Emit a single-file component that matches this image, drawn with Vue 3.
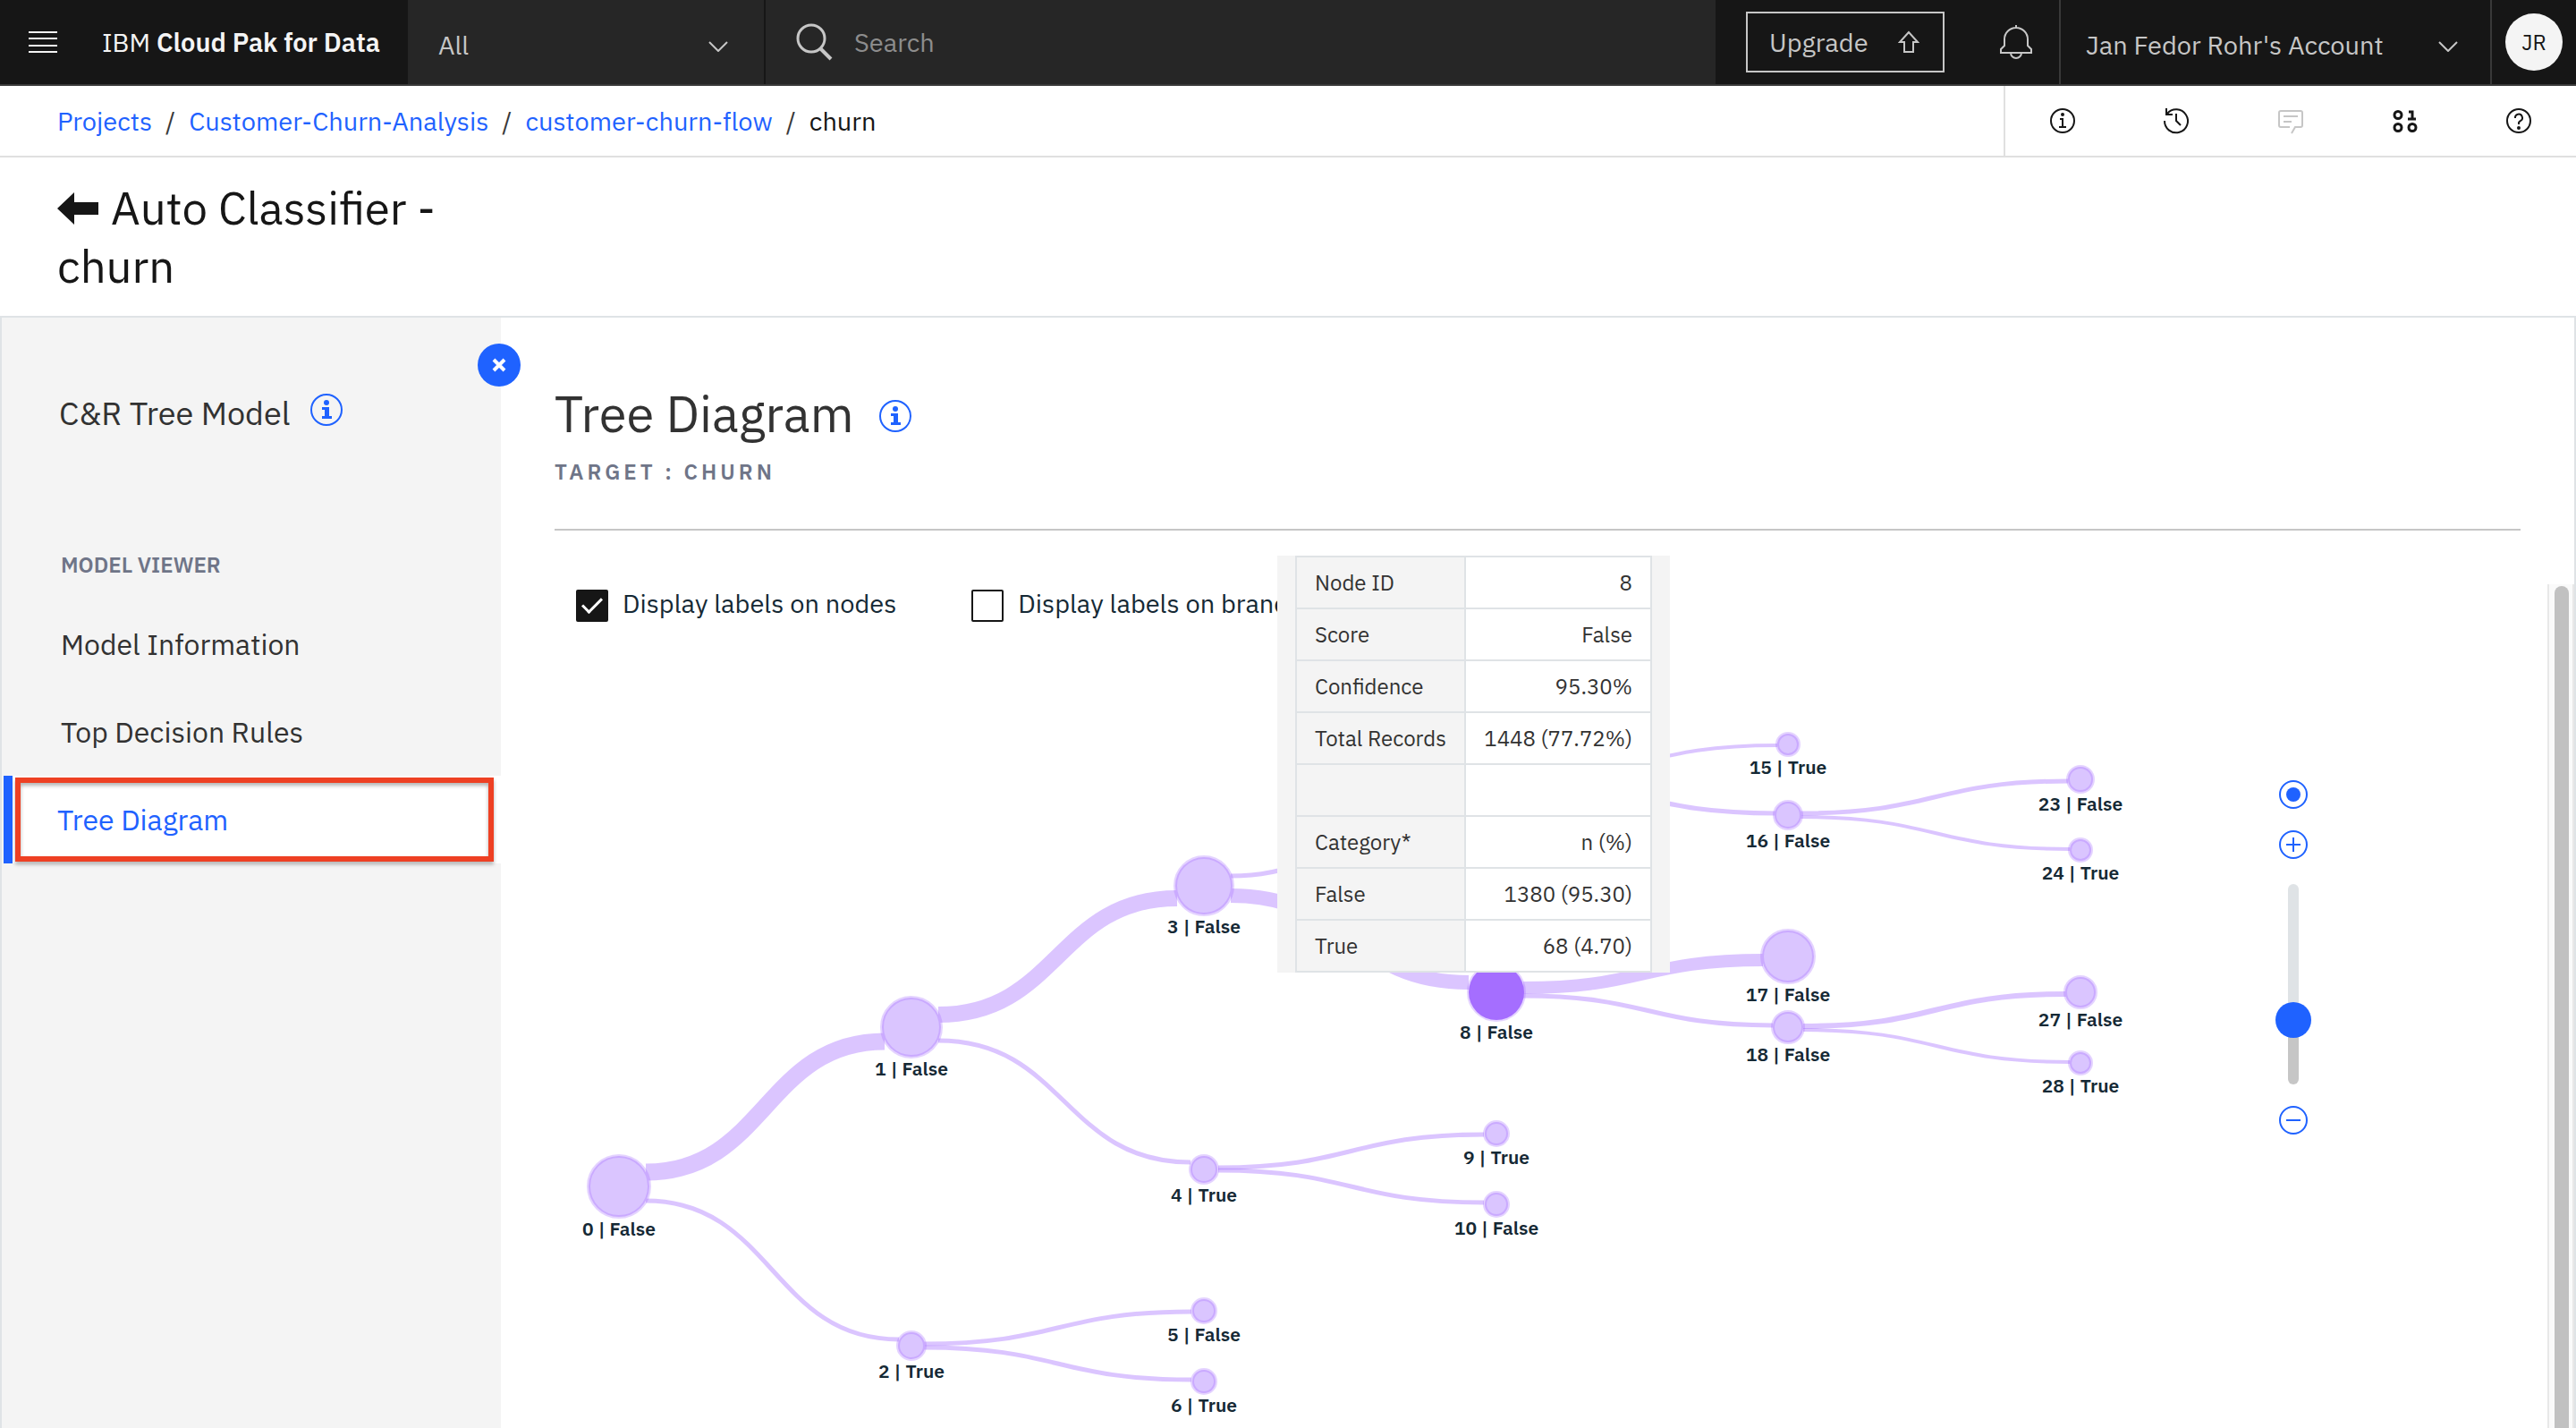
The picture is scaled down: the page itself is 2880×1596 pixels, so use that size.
<script setup>
import { ref, computed } from 'vue'

const search = ref('')
const showNodeLabels = ref(true)
const showBranchLabels = ref(false)
const zoom = ref(28)

const crumbs = ['Projects', 'Customer-Churn-Analysis', 'customer-churn-flow']
const sections = ['Model Information', 'Top Decision Rules', 'Tree Diagram']
const active = ref('Tree Diagram')

const details = [
  ['Node ID', '8'],
  ['Score', 'False'],
  ['Confidence', '95.30%'],
  ['Total Records', '1448 (77.72%)'],
  ['', ''],
  ['Category*', 'n (%)'],
  ['False', '1380 (95.30)'],
  ['True', '68 (4.70)'],
]

const nodes = [
  { id: 0, label: 'False', x: 72, y: 626, r: 34 },
  { id: 1, label: 'False', x: 399, y: 448, r: 33 },
  { id: 2, label: 'True', x: 399, y: 804, r: 15 },
  { id: 3, label: 'False', x: 726, y: 290, r: 32 },
  { id: 4, label: 'True', x: 726, y: 607, r: 15 },
  { id: 5, label: 'False', x: 726, y: 765, r: 13 },
  { id: 6, label: 'True', x: 726, y: 844, r: 13 },
  { id: 8, label: 'False', x: 1053, y: 409, r: 31, selected: true },
  { id: 9, label: 'True', x: 1053, y: 567, r: 13 },
  { id: 10, label: 'False', x: 1053, y: 646, r: 13 },
  { id: 15, label: 'True', x: 1379, y: 132, r: 12 },
  { id: 16, label: 'False', x: 1379, y: 211, r: 15 },
  { id: 17, label: 'False', x: 1379, y: 369, r: 29 },
  { id: 18, label: 'False', x: 1379, y: 448, r: 17 },
  { id: 23, label: 'False', x: 1706, y: 171, r: 14 },
  { id: 24, label: 'True', x: 1706, y: 250, r: 12 },
  { id: 27, label: 'False', x: 1706, y: 409, r: 17 },
  { id: 28, label: 'True', x: 1706, y: 488, r: 12 },
]

// [x1, y1, x2, y2, width]
const links = [
  [102, 610, 369, 464, 19],
  [102, 642, 385, 797, 5],
  [429, 434, 696, 304, 18],
  [429, 463, 711, 599, 5],
  [413, 802, 712, 766, 5],
  [413, 806, 712, 842, 5],
  [756, 279, 1040, 174, 5],
  [756, 301, 1022, 398, 16],
  [742, 605, 1039, 568, 5],
  [742, 608, 1039, 644, 5],
  [1066, 170, 1367, 133, 4],
  [1066, 174, 1365, 209, 5],
  [1083, 404, 1351, 373, 14],
  [1083, 413, 1362, 446, 5],
  [1393, 209, 1692, 173, 5],
  [1393, 213, 1694, 249, 4],
  [1396, 447, 1690, 411, 6],
  [1396, 451, 1694, 487, 4],
]

const linkPath = ([x1, y1, x2, y2]) => {
  const mid = (x1 + x2) / 2
  return `M${x1} ${y1}C${mid} ${y1} ${mid} ${y2} ${x2} ${y2}`
}
const sliderFill = computed(() => ({ '--fill': `${zoom.value}%` }))
</script>

<template>
  <div class="app">
    <header class="topbar">
      <button class="menu" aria-label="Menu">
        <svg width="32" height="24" viewBox="0 0 32 24"><path d="M0 1h32M0 8h32M0 16h32M0 23h32" stroke="#f4f4f4" stroke-width="2" /></svg>
      </button>
      <a class="brand" href="#">IBM <b>Cloud Pak for Data</b></a>
      <div class="scope">
        <select aria-label="Search scope"><option>All</option></select>
        <svg class="chevron" width="22" height="12" viewBox="0 0 22 12"><path d="M1 1l10 10L21 1" /></svg>
      </div>
      <label class="search">
        <svg width="42" height="42" viewBox="0 0 42 42" fill="none" stroke="#c6c6c6" stroke-width="3"><circle cx="18" cy="17" r="15" /><path d="M28 28l12 12" stroke-width="4" /></svg>
        <input v-model="search" type="search" placeholder="Search" aria-label="Search" />
      </label>
      <button class="upgrade">
        Upgrade
        <svg width="24" height="26" viewBox="0 0 24 26" fill="none" stroke="#c6c6c6" stroke-width="2"><path d="M12 2L2 13h5v11h10V13h5z" /></svg>
      </button>
      <button class="bell" aria-label="Notifications">
        <svg width="36" height="40" viewBox="0 0 36 40" fill="none" stroke="#c6c6c6" stroke-width="2"><path d="M18 1v4M5 24V17a13 13 0 0 1 26 0v7l4 4v4H1v-4zM12 32a6 6 0 0 0 12 0" /></svg>
      </button>
      <div class="account">
        <select aria-label="Account"><option>Jan Fedor Rohr's Account</option></select>
        <svg class="chevron" width="22" height="12" viewBox="0 0 22 12"><path d="M1 1l10 10L21 1" /></svg>
      </div>
      <button class="profile"><span>JR</span></button>
    </header>

    <div class="crumbbar">
      <nav class="crumbs" aria-label="Breadcrumb">
        <template v-for="crumb in crumbs" :key="crumb">
          <a href="#">{{ crumb }}</a><span class="slash">/</span>
        </template>
        <span>churn</span>
      </nav>
      <div class="tools">
        <button aria-label="Information">
          <svg viewBox="0 0 32 32"><circle cx="16" cy="16" r="13" /><path d="M13 14h3v9M12 23h8" /><circle class="dot" cx="16" cy="9" r="2" /></svg>
        </button>
        <button aria-label="History">
          <svg viewBox="0 0 32 32"><path d="M5 2v7h7M6 8A13 13 0 1 1 3 16M16 8v8l5 5" /></svg>
        </button>
        <button aria-label="Comments" class="muted">
          <svg viewBox="0 0 32 32"><path d="M15 23H5a2 2 0 0 1-2-2V7a2 2 0 0 1 2-2h22a2 2 0 0 1 2 2v14a2 2 0 0 1-2 2h-6l-4 7M8 11h16M8 17h9" /></svg>
        </button>
        <button aria-label="Data">
          <svg viewBox="0 0 32 32" class="bold"><circle cx="8" cy="9.500" r="4" /><circle cx="8" cy="23.500" r="4" /><circle cx="24" cy="23.500" r="4" /><path d="M20 6h4v8M19 14h9" /></svg>
        </button>
        <button aria-label="Help">
          <svg viewBox="0 0 32 32"><circle cx="16" cy="16" r="13" /><path d="M12 13a4 4 0 1 1 6 3c-1 1-2 1-2 2v2" /><circle class="dot" cx="16" cy="24" r="2" /></svg>
        </button>
      </div>
    </div>

    <div class="titlebar">
      <h1>
        <button class="back" aria-label="Back"><svg width="46" height="36" viewBox="0 0 46 36"><path d="M0 18L19 0v11h27v14H19v11z" fill="#161616" /></svg></button>
        Auto Classifier - churn
      </h1>
    </div>

    <div class="body">
      <aside class="sidebar">
        <button class="close" aria-label="Close panel">
          <svg width="16" height="16" viewBox="0 0 16 16"><path d="M2 2l12 12M14 2L2 14" stroke="#fff" stroke-width="4" /></svg>
        </button>
        <h2>
          C&amp;R Tree Model
          <button class="info" aria-label="About the model">
            <svg width="36" height="36" viewBox="0 0 36 36"><circle cx="18" cy="18" r="17" /><path class="dot" d="M13 15h8v10h3v3H13v-3h3v-7h-3z" /><circle class="dot" cx="18" cy="10" r="3" /></svg>
          </button>
        </h2>
        <h3>MODEL VIEWER</h3>
        <nav>
          <a v-for="item in sections" :key="item" href="#" :class="{ active: item === active }" @click.prevent="active = item"><span>{{ item }}</span></a>
        </nav>
      </aside>

      <main class="main">
        <div class="heading">
          <h2>
            Tree Diagram
            <button class="info" aria-label="About the diagram">
              <svg width="36" height="36" viewBox="0 0 36 36"><circle cx="18" cy="18" r="17" /><path class="dot" d="M13 15h8v10h3v3H13v-3h3v-7h-3z" /><circle class="dot" cx="18" cy="10" r="3" /></svg>
            </button>
          </h2>
          <p>TARGET : CHURN</p>
        </div>

        <div class="pane">
          <div class="content">
            <div class="options">
              <label><input v-model="showNodeLabels" type="checkbox" />Display labels on nodes</label>
              <label><input v-model="showBranchLabels" type="checkbox" />Display labels on branches</label>
            </div>
            <div class="canvas">
              <div class="tree">
                <svg width="1800" height="896">
                  <path v-for="(link, i) in links" :key="i" class="link" :d="linkPath(link)" :stroke-width="link[4]" />
                  <g v-for="node in nodes" :key="node.id" class="node" :class="{ selected: node.selected }">
                    <circle :cx="node.x" :cy="node.y" :r="node.r" />
                    <text v-if="showNodeLabels" :x="node.x" :y="node.y + node.r + 21">{{ node.id }} | {{ node.label }}</text>
                  </g>
                </svg>
              </div>
              <div class="zoom">
                <button aria-label="Reset zoom"><svg viewBox="0 0 32 32"><circle cx="16" cy="16" r="15" /><circle class="dot" cx="16" cy="16" r="8" /></svg></button>
                <button aria-label="Zoom in"><svg viewBox="0 0 32 32"><circle cx="16" cy="16" r="15" /><path d="M8 16h16M16 8v16" /></svg></button>
                <input v-model="zoom" type="range" min="0" max="100" aria-label="Zoom" :style="sliderFill" />
                <button aria-label="Zoom out"><svg viewBox="0 0 32 32"><circle cx="16" cy="16" r="15" /><path d="M8 16h16" /></svg></button>
              </div>
            </div>
          </div>
          <div class="scrollbar"><div class="thumb"></div></div>
        </div>

        <div class="tooltip">
          <table>
            <tbody>
              <tr v-for="(row, i) in details" :key="i">
                <th scope="row">{{ row[0] }}</th>
                <td>{{ row[1] }}</td>
              </tr>
            </tbody>
          </table>
        </div>
      </main>
    </div>
  </div>
</template>

<style>
body {
  margin: 0;
  background: #fff;
}
</style>

<style scoped>
.app {
  display: flex;
  flex-direction: column;
  height: 100vh;
  overflow: hidden;
  font-family: "IBM Plex Sans", "Noto Sans", sans-serif;
  font-size: 29px;
  color: #161616;
}
.app *,
.app *::before {
  box-sizing: border-box;
}
button,
select,
input {
  font: inherit;
  color: inherit;
  margin: 0;
  padding: 0;
  border: 0;
  border-radius: 0;
  background: none;
  outline: none;
  appearance: none;
}
button {
  display: flex;
  align-items: center;
  justify-content: center;
}
a {
  color: #1f62ff;
  text-decoration: none;
}
h1,
h2,
h3,
p {
  margin: 0;
  font-weight: 400;
}
svg {
  display: block;
  flex: none;
}

.topbar {
  display: flex;
  flex: none;
  height: 96px;
  border-bottom: 2px solid #393939;
  background: #161616;
  color: #c6c6c6;
}
.menu {
  width: 96px;
}
.brand {
  display: flex;
  align-items: center;
  width: 360px;
  padding-left: 18px;
  color: #f4f4f4;
  white-space: pre;
}
.brand b {
  font-weight: 600;
}
.scope,
.account {
  position: relative;
  display: flex;
}
.scope select,
.account select {
  width: 100%;
  padding: 6px 64px 0 34px;
}
.scope {
  width: 400px;
  border-right: 2px solid #161616;
  background: #262626;
}
.chevron {
  position: absolute;
  top: 46px;
  right: 40px;
  fill: none;
  stroke: #c6c6c6;
  stroke-width: 2;
  pointer-events: none;
}
.search {
  display: flex;
  flex: 1;
  align-items: center;
  gap: 24px;
  padding-left: 33px;
  background: #262626;
}
.search input {
  flex: 1;
}
.search input::placeholder {
  color: #8d8d8d;
}
.upgrade {
  justify-content: space-between;
  align-self: center;
  width: 222px;
  height: 68px;
  margin-left: 34px;
  padding: 0 26px 0 24px;
  border: 2px solid #c6c6c6;
}
.bell {
  width: 36px;
  margin: 0 30px 0 62px;
}
.account {
  width: 484px;
  border-left: 2px solid #393939;
  border-right: 2px solid #393939;
}
.account select {
  padding-left: 28px;
}
.account .chevron {
  right: 36px;
}
.profile {
  width: 94px;
}
.profile span {
  width: 64px;
  border-radius: 50%;
  background: #f4f4f4;
  color: #161616;
  font-size: 24px;
  line-height: 64px;
}

.crumbbar {
  display: flex;
  flex: none;
  height: 80px;
  border-bottom: 2px solid #e0e0e0;
}
.crumbs {
  display: flex;
  flex: 1;
  align-items: center;
  padding-left: 64px;
}
.slash {
  margin: 0 15px;
  color: #393939;
}
.tools {
  display: flex;
  width: 640px;
  border-left: 2px solid #e0e0e0;
}
.tools button {
  flex: 1;
}
.tools svg {
  width: 32px;
  height: 32px;
  fill: none;
  stroke: #161616;
  stroke-width: 2;
}
.tools .bold {
  stroke-width: 3;
}
.tools .muted svg {
  stroke: #c6c6c6;
}
.tools .dot {
  fill: #161616;
  stroke: none;
}

.titlebar {
  flex: none;
  padding: 24px 64px 23px;
  border-bottom: 2px solid #dfe3e6;
}
h1 {
  max-width: 500px;
  font-size: 51px;
  line-height: 65px;
}
.back {
  display: inline-flex;
  margin-right: 2px;
}

.body {
  display: flex;
  flex: 1;
  min-height: 0;
  border: solid #dfe3e6;
  border-width: 0 2px;
}
.sidebar {
  position: relative;
  flex: none;
  width: 558px;
  padding-top: 85px;
  background: #f4f4f4;
  color: #323232;
}
.close {
  position: absolute;
  top: 29px;
  right: -22px;
  z-index: 1;
  width: 48px;
  height: 48px;
  border-radius: 50%;
  background: #1f62ff;
}
.sidebar h2 {
  display: flex;
  gap: 22px;
  padding-left: 64px;
  font-size: 36px;
  line-height: 44px;
}
.info {
  height: 36px;
}
.info svg {
  fill: none;
  stroke: #1f62ff;
  stroke-width: 2;
}
.info .dot,
.zoom .dot {
  fill: #1f62ff;
  stroke: none;
}
.sidebar h3 {
  margin: 131px 0 24px;
  padding-left: 66px;
  color: #6f7588;
  font-size: 24px;
  font-weight: 600;
  line-height: 32px;
}
.sidebar nav a {
  display: flex;
  height: 98px;
  color: #323232;
  font-size: 32px;
  line-height: 86px;
  padding: 6px 66px;
}
.sidebar nav a.active {
  padding: 2px 8px 2px 0;
  margin-left: 2px;
  border-left: 10px solid #1f62ff;
  background: #fff;
  color: #1f62ff;
}
.sidebar nav a.active span {
  flex: 1;
  margin-left: 3px;
  padding-left: 41px;
  border: 6px solid #ee4023;
  line-height: 82px;
  box-shadow: 0 3px 4px rgba(0, 0, 0, 0.3), inset 0 3px 4px rgba(0, 0, 0, 0.3);
}

.main {
  position: relative;
  display: flex;
  flex: 1;
  flex-direction: column;
  min-width: 0;
  background: #fff;
}
.heading {
  margin: 0 60px;
  padding: 75px 0 48px;
  border-bottom: 2px solid #c6c6c6;
}
.heading h2 {
  display: flex;
  align-items: center;
  gap: 28px;
  color: #323232;
  font-size: 56px;
  line-height: 64px;
}
.heading .info {
  margin-top: 6px;
}
.heading p {
  margin-top: 17px;
  color: #6f7588;
  font-size: 24px;
  font-weight: 600;
  line-height: 32px;
  letter-spacing: 4px;
}
.pane {
  display: flex;
  flex: 1;
  min-height: 0;
  margin-top: 60px;
}
.content {
  display: flex;
  flex: 1;
  flex-direction: column;
  min-width: 0;
}
.options {
  display: flex;
  gap: 84px;
  padding: 6px 84px 5px;
  color: #152935;
  line-height: 30px;
}
.options label {
  display: flex;
  gap: 16px;
  white-space: nowrap;
}
.options input {
  width: 36px;
  height: 36px;
  border: 2px solid #161616;
  border-radius: 2px;
}
.options input:checked {
  background: #161616;
}
.options input:checked::before {
  content: "";
  display: block;
  width: 12px;
  height: 22px;
  margin: 2px 0 0 10px;
  border: solid #fff;
  border-width: 0 3px 3px 0;
  transform: rotate(45deg);
}
.canvas {
  display: flex;
  flex: 1;
  min-height: 0;
}
.tree {
  flex: 1;
  min-width: 0;
  margin-left: 60px;
  overflow: hidden;
}
.link {
  fill: none;
  stroke: #a56eff;
  stroke-opacity: 0.4;
}
.node circle {
  fill: #dac5ff;
  stroke: #a56eff;
  stroke-opacity: 0.3;
  stroke-width: 4;
}
.node.selected circle {
  fill: #a56eff;
}
.node text {
  fill: #152935;
  font-size: 21px;
  font-weight: 600;
  text-anchor: middle;
}
.zoom {
  display: flex;
  flex-direction: column;
  align-items: center;
  gap: 24px;
  width: 40px;
  margin: 172px 264px 0 0;
}
.zoom svg {
  width: 32px;
  height: 32px;
  fill: none;
  stroke: #1f62ff;
  stroke-width: 2;
}
.zoom input {
  width: 12px;
  height: 224px;
  margin: 4px 0 0;
  border-radius: 6px;
  background: linear-gradient(to top, #c6c6c6 var(--fill), #dfe3e6 var(--fill));
  writing-mode: vertical-lr;
  direction: rtl;
}
.zoom input::-webkit-slider-thumb {
  width: 40px;
  height: 40px;
  border-radius: 50%;
  background: #1f62ff;
  appearance: none;
}
.scrollbar {
  width: 30px;
  padding: 2px 4px 0 6px;
  border: solid #e8e8e8;
  border-width: 0 2px;
  background: #fafafa;
}
.thumb {
  width: 16px;
  height: 100%;
  border-radius: 8px 8px 0 0;
  background: #c1c1c1;
}
.tooltip {
  position: absolute;
  top: 266px;
  left: 868px;
  padding: 0 20px;
  background: #f4f4f4;
}
table {
  border-collapse: collapse;
  color: #323232;
  font-size: 24px;
  line-height: 32px;
}
th,
td {
  height: 58px;
  padding: 0 20px;
  border: 2px solid #dfe3e6;
  font-weight: 400;
  text-align: left;
}
th {
  width: 189px;
}
td {
  width: 208px;
  background: #fff;
  text-align: right;
}
</style>
